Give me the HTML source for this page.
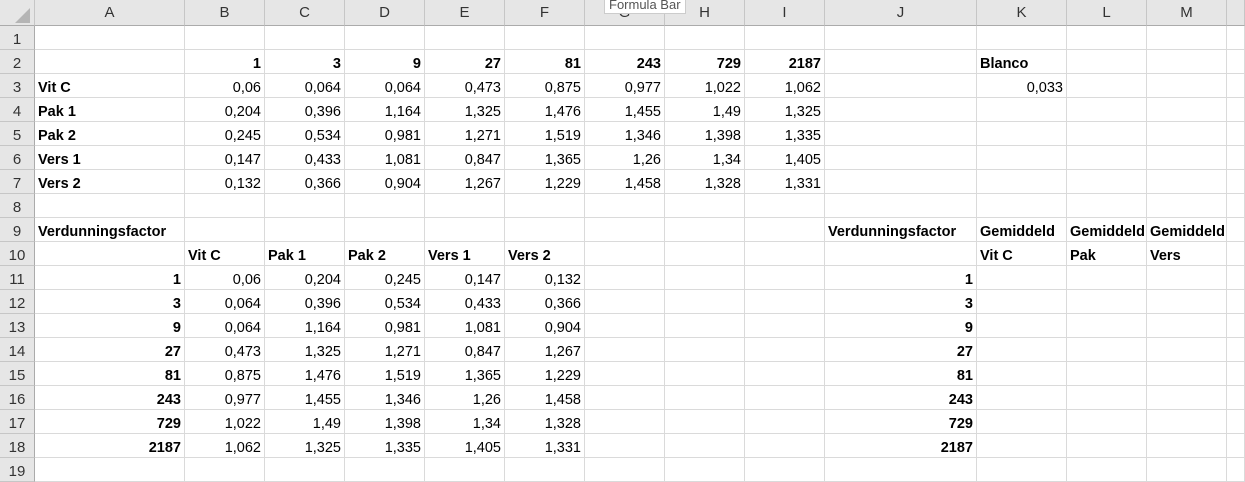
<!DOCTYPE html>
<html><head><style>
body{margin:0;width:1245px;height:471px;overflow:hidden;background:#fff;font-family:"Liberation Sans",Arial,sans-serif;}
.g{display:grid;grid-template-columns:35px 150px 80px 80px 80px 80px 80px 80px 80px 80px 152px 90px 80px 80px 18px;grid-template-rows:26px repeat(19,24px);position:absolute;left:0;top:0;}
.g>*{box-sizing:border-box;border-right:1px solid #dadada;border-bottom:1px solid #dadada;font-size:14.5px;color:#000;white-space:nowrap;overflow:hidden;display:flex;align-items:flex-end;justify-content:flex-end;padding:0 3px 0 3px;font-style:normal;line-height:17px;}
.g>.l{justify-content:flex-start;}
.g>.b{font-weight:bold;font-size:14.5px;padding-bottom:0;line-height:17px;}
.g>.h{background:#e6e6e6;color:#333;justify-content:center;align-items:center;font-size:15px;border-color:#c6c6c6;border-bottom:1px solid #ababab;padding:0;}
.g>.r{background:#e6e6e6;color:#333;justify-content:center;font-size:15px;border-color:#c6c6c6;border-right:1px solid #ababab;padding:0 0 1px 0;}
.tip{position:absolute;left:604px;top:-4px;background:#fff;border:1px solid #ccc;font-size:13px;color:#555;padding:0 4px;line-height:16px;}
.corner{position:absolute;left:15px;top:8px;width:0;height:0;border-left:15px solid transparent;border-bottom:15px solid #b5b5b5;}
</style></head><body>
<div class="g">
<i class="h"></i><i class="h">A</i><i class="h">B</i><i class="h">C</i><i class="h">D</i><i class="h">E</i><i class="h">F</i><i class="h">G</i><i class="h">H</i><i class="h">I</i><i class="h">J</i><i class="h">K</i><i class="h">L</i><i class="h">M</i><i class="h"></i>
<i class="r">1</i><i></i><i></i><i></i><i></i><i></i><i></i><i></i><i></i><i></i><i></i><i></i><i></i><i></i><i></i>
<i class="r">2</i><i></i><i class="b">1</i><i class="b">3</i><i class="b">9</i><i class="b">27</i><i class="b">81</i><i class="b">243</i><i class="b">729</i><i class="b">2187</i><i></i><i class="l b">Blanco</i><i></i><i></i><i></i>
<i class="r">3</i><i class="l b">Vit C</i><i>0,06</i><i>0,064</i><i>0,064</i><i>0,473</i><i>0,875</i><i>0,977</i><i>1,022</i><i>1,062</i><i></i><i>0,033</i><i></i><i></i><i></i>
<i class="r">4</i><i class="l b">Pak 1</i><i>0,204</i><i>0,396</i><i>1,164</i><i>1,325</i><i>1,476</i><i>1,455</i><i>1,49</i><i>1,325</i><i></i><i></i><i></i><i></i><i></i>
<i class="r">5</i><i class="l b">Pak 2</i><i>0,245</i><i>0,534</i><i>0,981</i><i>1,271</i><i>1,519</i><i>1,346</i><i>1,398</i><i>1,335</i><i></i><i></i><i></i><i></i><i></i>
<i class="r">6</i><i class="l b">Vers 1</i><i>0,147</i><i>0,433</i><i>1,081</i><i>0,847</i><i>1,365</i><i>1,26</i><i>1,34</i><i>1,405</i><i></i><i></i><i></i><i></i><i></i>
<i class="r">7</i><i class="l b">Vers 2</i><i>0,132</i><i>0,366</i><i>0,904</i><i>1,267</i><i>1,229</i><i>1,458</i><i>1,328</i><i>1,331</i><i></i><i></i><i></i><i></i><i></i>
<i class="r">8</i><i></i><i></i><i></i><i></i><i></i><i></i><i></i><i></i><i></i><i></i><i></i><i></i><i></i><i></i>
<i class="r">9</i><i class="l b">Verdunningsfactor</i><i></i><i></i><i></i><i></i><i></i><i></i><i></i><i></i><i class="l b">Verdunningsfactor</i><i class="l b">Gemiddeld</i><i class="l b">Gemiddeld</i><i class="l b">Gemiddeld</i><i></i>
<i class="r">10</i><i></i><i class="l b">Vit C</i><i class="l b">Pak 1</i><i class="l b">Pak 2</i><i class="l b">Vers 1</i><i class="l b">Vers 2</i><i></i><i></i><i></i><i></i><i class="l b">Vit C</i><i class="l b">Pak</i><i class="l b">Vers</i><i></i>
<i class="r">11</i><i class="b">1</i><i>0,06</i><i>0,204</i><i>0,245</i><i>0,147</i><i>0,132</i><i></i><i></i><i></i><i class="b">1</i><i></i><i></i><i></i><i></i>
<i class="r">12</i><i class="b">3</i><i>0,064</i><i>0,396</i><i>0,534</i><i>0,433</i><i>0,366</i><i></i><i></i><i></i><i class="b">3</i><i></i><i></i><i></i><i></i>
<i class="r">13</i><i class="b">9</i><i>0,064</i><i>1,164</i><i>0,981</i><i>1,081</i><i>0,904</i><i></i><i></i><i></i><i class="b">9</i><i></i><i></i><i></i><i></i>
<i class="r">14</i><i class="b">27</i><i>0,473</i><i>1,325</i><i>1,271</i><i>0,847</i><i>1,267</i><i></i><i></i><i></i><i class="b">27</i><i></i><i></i><i></i><i></i>
<i class="r">15</i><i class="b">81</i><i>0,875</i><i>1,476</i><i>1,519</i><i>1,365</i><i>1,229</i><i></i><i></i><i></i><i class="b">81</i><i></i><i></i><i></i><i></i>
<i class="r">16</i><i class="b">243</i><i>0,977</i><i>1,455</i><i>1,346</i><i>1,26</i><i>1,458</i><i></i><i></i><i></i><i class="b">243</i><i></i><i></i><i></i><i></i>
<i class="r">17</i><i class="b">729</i><i>1,022</i><i>1,49</i><i>1,398</i><i>1,34</i><i>1,328</i><i></i><i></i><i></i><i class="b">729</i><i></i><i></i><i></i><i></i>
<i class="r">18</i><i class="b">2187</i><i>1,062</i><i>1,325</i><i>1,335</i><i>1,405</i><i>1,331</i><i></i><i></i><i></i><i class="b">2187</i><i></i><i></i><i></i><i></i>
<i class="r">19</i><i></i><i></i><i></i><i></i><i></i><i></i><i></i><i></i><i></i><i></i><i></i><i></i><i></i><i></i>
</div>
<div class="corner"></div>
<div class="tip">Formula Bar</div>
</body></html>
